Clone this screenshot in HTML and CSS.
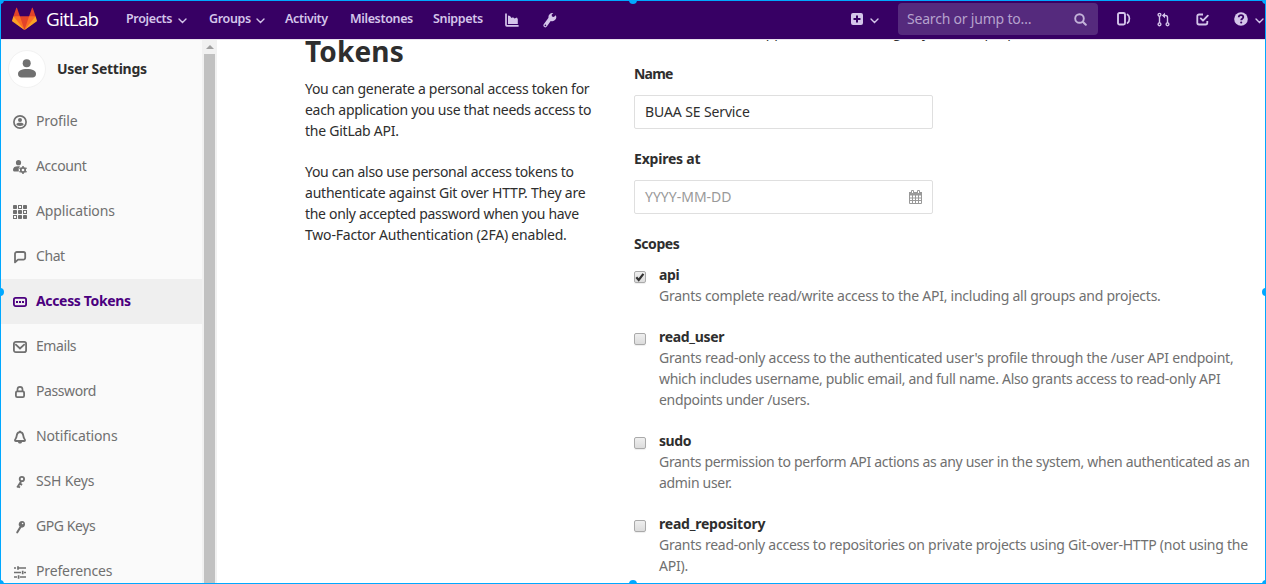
FILE: index.html
```html
<!DOCTYPE html>
<html lang="en">
<head>
<meta charset="utf-8">
<title>Access Tokens · User Settings · GitLab</title>
<link rel="stylesheet" href="styles.css">
</head>
<body>
<header class="navbar">
  <a class="brand">
    <svg class="logo" width="25" height="24" viewBox="0 0 36 36" preserveAspectRatio="none"><path fill="#e24329" d="M2 14l9.38 9v-9l-4-12.28c-.205-.632-1.176-.632-1.38 0z"/><path fill="#e24329" d="M34 14l-9.38 9v-9l4-12.28c.205-.632 1.176-.632 1.38 0z"/><path fill="#e24329" d="M18 34.38 3 14 33 14z"/><path fill="#fc6d26" d="M18 34.38 11.38 14 2 14 6 25z"/><path fill="#fc6d26" d="M18 34.38 24.62 14 34 14 30 25z"/><path fill="#fca326" d="M2 14L.1 20.16c-.18.565 0 1.2.5 1.56l17.42 12.66z"/><path fill="#fca326" d="M34 14l1.9 6.16c.18.565 0 1.2-.5 1.56L18 34.38z"/></svg>
    <span class="wordmark">GitLab</span>
  </a>
  <nav class="menu">
    <a class="projects"><span>Projects</span><svg class="chev" width="9" height="6" viewBox="0 0 9 6"><path d="M1 1l3.5 3.5L8 1"/></svg></a>
    <a class="groups"><span>Groups</span><svg class="chev" width="9" height="6" viewBox="0 0 9 6"><path d="M1 1l3.5 3.5L8 1"/></svg></a>
    <a class="activity"><span>Activity</span></a>
    <a class="milestones"><span>Milestones</span></a>
    <a class="snippets"><span>Snippets</span></a>
    <a><svg width="14" height="14" viewBox="0 0 14 14"><path class="stroke" stroke-width="1.7" d="M1 .5V12a.8.8 0 0 0 .8.8H13.6"/><path d="M3 11V2.5L5 3l1.5 2L8 4.2 9.5 5.6 12 4.6l.8 1.6V11z"/></svg></a>
    <a><svg width="14" height="16" viewBox="0 0 14 16"><path d="M12.7 3.2 10.9 5 9 4.5 8.6 2.800 10.300 1.100A4 4 0 0 0 5.500 5.800L.9 12.100a1.900 1.900 0 1 0 2.900 2.500L7.700 8.900a4 4 0 0 0 5-5.700zM2.400 14.200a.8.8 0 1 1 0-1.600.8.8 0 0 1 0 1.600z"/></svg></a>
  </nav>
  <div class="tools">
    <a class="new"><svg width="12" height="12" viewBox="0 0 12 12"><path fill-rule="evenodd" d="M2 0h8a2 2 0 0 1 2 2v8a2 2 0 0 1-2 2H2a2 2 0 0 1-2-2V2a2 2 0 0 1 2-2zm3 2.500V5H2.500v2H5v2.500h2V7h2.500V5H7V2.500z"/></svg><svg class="chev" width="9" height="6" viewBox="0 0 9 6"><path d="M1 1l3.500 3.500L8 1"/></svg></a>
    <div class="search"><span>Search or jump to…</span><svg width="13" height="13" viewBox="0 0 13 13"><circle class="stroke" cx="5.500" cy="5.500" r="4.300" stroke-width="1.900"/><path class="stroke" stroke-width="2" stroke-linecap="round" d="M9 9l2.800 2.800"/></svg></div>
    <a class="issues"><svg width="14" height="14" viewBox="0 0 14 14"><rect class="stroke" x="1" y="1" width="7" height="11.500" rx="1.500" stroke-width="1.900"/><path class="stroke" stroke-width="1.700" stroke-linecap="round" d="M10.500 2.500c1.300.8 1.900 2 1.900 4s-.6 3.600-1.900 4.500"/></svg></a>
    <a class="merges"><svg width="13" height="15" viewBox="0 0 13 15"><g class="stroke" stroke-width="1.400"><circle cx="2.500" cy="2.800" r="1.400"/><circle cx="2.500" cy="12.300" r="1.400"/><circle cx="10.500" cy="12.300" r="1.400"/><path d="M2.500 4.200V11M10.500 11V5.500a2 2 0 0 0-2-2H7"/></g><path d="M8 .8v5.400L4.900 3.500z"/></svg></a>
    <a class="todos"><svg width="13" height="13" viewBox="0 0 13 13"><path class="stroke" stroke-width="1.800" d="M7 1.500H3a1.700 1.700 0 0 0-1.700 1.700v6.600A1.700 1.700 0 0 0 3 11.500h6.600a1.700 1.700 0 0 0 1.700-1.700V8"/><path class="stroke" stroke-width="1.800" stroke-linecap="round" stroke-linejoin="round" d="M4.800 5.400 7 7.700l4.800-5"/></svg></a>
    <a class="help"><svg width="14" height="14" viewBox="0 0 14 14"><circle cx="7" cy="7" r="6.800"/><path class="mark" d="M4.700 5.300C4.800 3.800 5.700 3.100 7 3.100s2.300.8 2.300 2c0 1.600-2.100 1.600-2.100 3.100"/><circle class="dot" cx="7.200" cy="10.500" r="1.050"/></svg><svg class="chev" width="9" height="6" viewBox="0 0 9 6"><path d="M1 1l3.500 3.500L8 1"/></svg></a>
  </div>
</header>
<div class="page">
  <aside class="sidebar">
    <div class="context">
      <span class="avatar"><svg width="18" height="19" viewBox="0 0 18 19"><circle cx="8.700" cy="4.200" r="4"/><path d="M0 15c0-3.300 3.500-5 9-5s9 1.700 9 5c0 2.200-1.300 3.500-3.500 3.500h-11C1.300 18.500 0 17.200 0 15z"/></svg></span>
      <strong>User Settings</strong>
    </div>
    <ul>
      <li><svg class="ico" viewBox="0 0 14 14"><circle class="stroke" cx="7" cy="7" r="6.100" stroke-width="1.700"/><circle cx="7" cy="5.100" r="2"/><path d="M3.300 9.300C3.800 8 5.200 7.700 7 7.700s3.200.3 3.700 1.600C10.300 10.400 9.400 11 7 11S3.700 10.400 3.300 9.300z"/></svg><span class="wide">Profile</span></li>
      <li><svg class="ico" viewBox="0 0 14 14"><circle cx="5.500" cy="2.700" r="2.600"/><path d="M0 9.700C0 7.300 2 6.200 5 6.200c.9 0 1.500.1 2 .3L5.700 8.200l.1 3.300H1.500C.5 11.500 0 10.800 0 9.700z"/><circle class="stroke" cx="10" cy="10" r="2.200" stroke-width="1.700"/><path class="stroke" stroke-width="1.500" d="M10 6v1.400M10 12.600V14M6.500 8l1.200.7M12.300 11.300l1.200.7M6.500 12l1.200-.7M12.300 8.700l1.200-.7"/></svg><span>Account</span></li>
      <li><svg class="ico" viewBox="0 0 14 14"><rect width="4" height="4" rx=".8"/><rect x="10" width="4" height="4" rx=".8"/><rect y="5" width="4" height="4" rx=".8"/><rect x="5" y="5" width="4" height="4" rx=".8"/><rect x="5" y="10" width="4" height="4" rx=".8"/><rect x="10" y="10" width="4" height="4" rx=".8"/><g class="stroke"><rect x="5.500" y=".5" width="3" height="3"/><rect x="10.500" y="5.500" width="3" height="3"/><rect x=".5" y="10.500" width="3" height="3"/></g></svg><span class="wide">Applications</span></li>
      <li><svg class="ico" viewBox="0 0 14 14"><path class="stroke" stroke-width="1.800" stroke-linejoin="round" d="M2 12.400V3.800A1.800 1.800 0 0 1 3.800 2h6.600a1.800 1.800 0 0 1 1.800 1.800v4a1.800 1.800 0 0 1-1.800 1.800H5z"/></svg><span>Chat</span></li>
      <li class="active"><svg class="ico" viewBox="0 0 14 14"><rect class="stroke" x=".9" y="2.900" width="12.200" height="8.200" rx="1.800" stroke-width="1.800"/><path d="M3 6h2v2H3zM6 6h2v2H6zM9 6h2v2H9z"/></svg><span>Access Tokens</span></li>
      <li><svg class="ico" viewBox="0 0 14 14"><rect class="stroke" x=".9" y="1.900" width="12.200" height="10.200" rx="1.900" stroke-width="1.800"/><path class="stroke" stroke-width="1.800" d="M2.300 4.200 7 8.500l4.700-4.300"/></svg><span>Emails</span></li>
      <li><svg class="ico" viewBox="0 0 14 14"><rect class="stroke" x="2.900" y="6.400" width="8.200" height="5.700" rx="1.300" stroke-width="1.800"/><path class="stroke" stroke-width="1.700" d="M4.500 6.500V4.300a2.500 2.500 0 0 1 5 0v2.200"/></svg><span>Password</span></li>
      <li><svg class="ico" viewBox="0 0 14 14"><path class="stroke" stroke-width="1.800" stroke-linejoin="round" d="M7 2.200c-2.300 0-3.100 1.600-3.300 3.500C3.500 7.700 2.800 8.500 2.100 9.700c-.4.800 0 1.300.8 1.300h8.200c.8 0 1.200-.5.8-1.300-.7-1.200-1.400-2-1.600-4C10.100 3.800 9.300 2.200 7 2.200z"/><path d="M5 12h4c-.2 1-.9 1.500-2 1.500S5.200 13 5 12zM6 .8h2v1.600H6z"/></svg><span class="wide">Notifications</span></li>
      <li><svg class="ico" viewBox="0 0 14 14"><circle class="stroke" cx="8.900" cy="4" r="2.200" stroke-width="1.800"/><path class="stroke" stroke-width="1.900" d="M8.200 6.200 4.200 12.600M6.800 8.600l2.300 1.300M5 11.300l2 1.200"/></svg><span class="wide">SSH Keys</span></li>
      <li><svg class="ico" viewBox="0 0 14 14"><path d="M9 1a3.300 3.300 0 1 1-.6 6.600L5 13a1 1 0 0 1-1.700-1l3.300-5.400A3.300 3.300 0 0 1 9 1z"/><circle class="hole" cx="9.600" cy="3.500" r=".8"/></svg><span>GPG Keys</span></li>
      <li><svg class="ico" viewBox="0 0 14 14"><path class="stroke" stroke-width="1.700" d="M1 3h2M5 3h8M1 7.500h7M11 7.500h2M1 12h3M7 12h6"/><path class="stroke" stroke-width="1.700" d="M5 1.300v3.500M9.700 5.800v3.500M5.600 10.300v3.500"/></svg><span class="wide">Preferences</span></li>
    </ul>
  </aside>
  <div class="scrollbar"><span class="up"></span><span class="thumb"></span></div>
  <main>
    <section class="about">
      <h4>Tokens</h4>
      <p><span class="sp-29">You can generate a personal access token for</span><br><span class="sp-29">each application you use that needs access to</span><br><span class="sp-24">the GitLab API.</span></p>
      <p><span class="sp-29">You can also use personal access tokens to</span><br><span class="sp-22">authenticate against Git over HTTP. They are</span><br><span class="sp-31">the only accepted password when you have</span><br><span class="sp-20">Two-Factor Authentication (2FA) enabled.</span></p>
    </section>
    <form class="token-form">
      <p class="intro"><span class="sp-31">Pick a name for the application, and we'll give you a unique personal access token.</span></p>
      <div class="group"><label class="tight">Name</label><div class="field"><span class="value">BUAA SE Service</span></div></div>
      <div class="group"><label class="sp-20">Expires at</label><div class="field"><span class="placeholder">YYYY-MM-DD</span>
        <svg class="calendar" width="13" height="14" viewBox="0 0 13 14"><path d="M.5 2.500h12v11H.5zM.5 5h12M3.500 5v8.500M6.500 5v8.500M9.500 5v8.500M.5 8h12M.5 10.500h12"/><path class="band" d="M0 2h13v3H0z"/><path class="ring" d="M2.500.5h2v3h-2zM8.500.5h2v3h-2z"/></svg></div></div>
      <label class="scopes-label">Scopes</label>
      <div class="scope"><span class="box"><svg width="10" height="10" viewBox="0 0 10 10"><path d="M1.300 5.300 3.700 8 8.400 1.900"/></svg></span><div><b>api</b><p><span class="sp-24">Grants complete read/write access to the API, including all groups and projects.</span></p></div></div>
      <div class="scope"><span class="box"></span><div><b class="sp-31">read_user</b><p><span class="sp-23">Grants read-only access to the authenticated user's profile through the /user API endpoint,</span><br><span class="sp-30">which includes username, public email, and full name. Also grants access to read-only API</span><br><span class="sp-31">endpoints under /users.</span></p></div></div>
      <div class="scope"><span class="box"></span><div><b>sudo</b><p><span class="sp-31">Grants permission to perform API actions as any user in the system, when authenticated as an</span><br><span class="sp-31">admin user.</span></p></div></div>
      <div class="scope"><span class="box"></span><div><b class="sp-22">read_repository</b><p><span class="sp-24">Grants read-only access to repositories on private projects using Git-over-HTTP (not using the</span><br><span class="sp-24">API).</span></p></div></div>
    </form>
  </main>
</div>
<div class="selection"><i class="tl"></i><i class="tc"></i><i class="tr"></i><i class="ml"></i><i class="mr"></i><i class="bl"></i><i class="bc"></i><i class="br"></i></div>
</body>
</html>
```
FILE: styles.css
```css
* { box-sizing: border-box; }
body { margin: 0; width: 1266px; height: 584px; overflow: hidden; background: #fff; color: #2e2e2e; font: 14px/21px "Noto Sans", "Open Sans", sans-serif; letter-spacing: -0.42px; display: flex; flex-direction: column; white-space: nowrap; }
p, ul, h4 { margin: 0; padding: 0; }
svg { display: block; flex: none; fill: currentColor; }
.stroke { fill: none; stroke: currentColor; }
.chev { fill: none; stroke: currentColor; stroke-width: 1.4; stroke-linecap: round; }

/* letter-spacing steps */
.sp-20 { letter-spacing: -0.2px; }
.sp-22 { letter-spacing: -0.22px; }
.sp-23 { letter-spacing: -0.233px; }
.sp-24 { letter-spacing: -0.245px; }
.sp-29 { letter-spacing: -0.29px; }
.sp-30 { letter-spacing: -0.3px; }
.sp-31 { letter-spacing: -0.31px; }
.tight { letter-spacing: -0.8px; }

/* top bar */
.navbar { flex: none; height: 40px; background: #370064; border-bottom: 1px solid #e9e2ee; color: #d4c5ea; display: flex; align-items: center; }
.brand { display: flex; align-items: center; width: 126px; padding-left: 12px; color: #fff; }
.logo { margin-top: -1px; }
.wordmark { margin: -1px 0 0 9px; font-size: 19px; font-family: "Open Sans", sans-serif; letter-spacing: -0.85px; line-height: 30px; }
.menu { display: grid; grid-template-columns: 83px 76px 65px 83px 72px 38px 20px; align-items: center; font-size: 12.5px; font-weight: 600; letter-spacing: -0.35px; }
.menu a { display: flex; align-items: center; }
.menu span { margin-top: -2px; }
.menu .chev { margin-top: 2px; }
.projects { gap: 6px; }
.groups { gap: 5px; }
.tools { display: flex; align-items: center; margin-left: 288px; }
.tools a { display: flex; align-items: center; margin-top: -1px; }
.new { gap: 7px; width: 47px; }
.tools .chev { margin-top: 3px; }
.search { width: 200px; height: 32px; margin-top: -1px; padding: 0 11px 0 9px; display: flex; align-items: center; justify-content: space-between; border-radius: 4px; background: #552a7d; color: #b5a2cd; letter-spacing: -0.2px; }
.search span { margin-top: -1px; }
.search svg { color: #c3b3d9; }
.issues { width: 40px; margin-left: 19px; }
.merges { width: 39px; }
.todos { width: 38px; }
.help { gap: 7px; }
.mark { fill: none; stroke: #370064; stroke-width: 1.8; }
.dot { fill: #370064; }

.page { flex: 1; min-height: 0; display: flex; overflow: hidden; }
.sidebar { width: 202px; background: #fafafa; color: #707070; }
.context { height: 59px; display: flex; align-items: center; padding: 0 0 2px 8px; color: #2e2e2e; }
.context strong { letter-spacing: -0.27px; }
.avatar { width: 38px; height: 38px; margin-right: 11px; border-radius: 50%; border: 1px solid #f2f2f2; background: #fff; color: #707070; display: flex; align-items: center; justify-content: center; }
.sidebar li { height: 45px; padding-left: 13px; display: flex; align-items: center; gap: 9px; }
.sidebar .active { background: #efefef; color: #4b007f; font-weight: 700; letter-spacing: -0.34px; }
.sidebar li span { margin-top: -3px; }
.sidebar .wide { letter-spacing: -0.14px; }
.ico { width: 14px; height: 14px; margin-top: 1px; }
.hole { fill: #fafafa; }
.scrollbar { width: 15px; background: #f1f1f1; display: flex; flex-direction: column; align-items: center; }
.up { border: 4px solid transparent; border-top: 0; border-bottom-color: #a0a0a0; margin: 5px 0 5px; }
.thumb { flex: 1; width: 11px; background: #c1c1c1; }

main { display: flex; height: 544px; overflow: hidden; }
.about { width: 329px; margin-left: 88px; }
h4 { margin: -7px 0 12px; height: 33px; font-size: 28px; line-height: 36px; font-weight: 700; letter-spacing: 0.15px; }
.about p { margin-bottom: 20px; }
.token-form { width: 632px; margin-top: -19px; }
.intro { margin-bottom: 21px; }
.group { margin-bottom: 19px; }
label { display: block; font-weight: 700; line-height: 21px; }
.field { width: 299px; height: 34px; margin-top: 11px; padding: 0 10px; border: 1px solid #dfdfdf; border-radius: 2px; display: flex; align-items: center; justify-content: space-between; }
.field span { margin-top: -2px; }
.value { letter-spacing: -0.12px; }
.placeholder { color: #999; letter-spacing: 0; }
.calendar path { fill: none; stroke: #999; }
.calendar .band { fill: #999; stroke: none; }
.calendar .ring { fill: #fff; }
.scope { display: flex; gap: 13px; margin-bottom: 20px; }
.scopes-label { margin-bottom: 10px; }
.scope b { display: block; }
.scope p { color: #707070; }
.box { flex: none; width: 12px; height: 12px; margin-top: 7px; border: 1px solid #aaa; border-radius: 2px; background: linear-gradient(#efefef, #dcdcdc); box-shadow: 0 1px 1px #eee; }
.box svg path { fill: none; stroke: #333; stroke-width: 2.2; }

/* selection frame drawn over the page */
.selection { position: absolute; inset: 0; width: 1266px; height: 584px; border: 1px solid #00a8ff; overflow: hidden; pointer-events: none; }
.selection i { position: absolute; width: 8px; height: 8px; border-radius: 50%; background: #00a8ff; }
.tl, .tc, .tr { top: -5px; }
.ml, .mr { top: 287px; }
.bl, .bc, .br { bottom: -5px; }
.tl, .ml, .bl { left: -5px; }
.tc, .bc { left: 628px; }
.tr, .mr, .br { right: -5px; }
```
